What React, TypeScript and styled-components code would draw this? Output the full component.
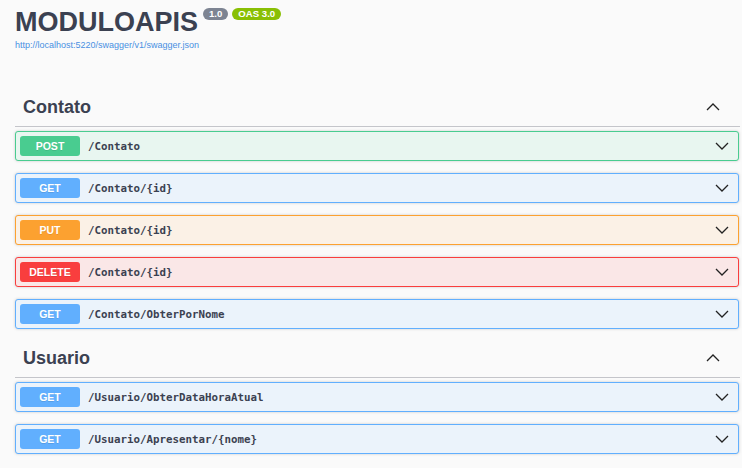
import React from "react";
import styled, { createGlobalStyle } from "styled-components";

const Global = createGlobalStyle`
  html, body { margin: 0; padding: 0; background: #fafafa; }
  body { font-family: "Liberation Sans", Arial, sans-serif; color: #3b4151; }
`;

const Page = styled.div`
  padding: 0 2px 0 15px;
`;

const Info = styled.div`
  padding-top: 6px;
  margin-bottom: 42px;
`;

const TitleRow = styled.div`
  display: flex;
  align-items: flex-start;
`;

const Title = styled.h2`
  margin: 0;
  font-size: 27px;
  line-height: 32px;
  font-weight: 700;
  color: #3b4151;
`;

const Pill = styled.span<{ $bg: string; $gap: number }>`
  display: inline-block;
  margin-top: 2px;
  margin-left: ${(p) => p.$gap}px;
  padding: 0 6px;
  height: 12px;
  line-height: 12px;
  border-radius: 7px;
  background: ${(p) => p.$bg};
  color: #fff;
  font-size: 9.6px;
  font-weight: 700;
`;

const Link = styled.a`
  display: block;
  margin-top: 1px;
  font-size: 9px;
  line-height: 12px;
  color: #4990e2;
  text-decoration: none;
`;

const Section = styled.section`
  margin-bottom: 15px;
`;

const TagHeader = styled.div`
  display: flex;
  align-items: center;
  justify-content: space-between;
  padding: 5px 20px 10px 8px;
  border-bottom: 1px solid #c4c5ca;
  margin-bottom: 4px;
  height: 18px;
`;

const TagName = styled.span`
  font-size: 18px;
  line-height: 18px;
  font-weight: 700;
  color: #3b4151;
`;

const Blocks = styled.div`
  display: flex;
  flex-direction: column;
  gap: 12px;
  padding-right: 1px;
`;

const colors: Record<string, { main: string; bg: string }> = {
  POST: { main: "#49cc90", bg: "#e8f6f0" },
  GET: { main: "#61affe", bg: "#ebf3fb" },
  PUT: { main: "#fca130", bg: "#fbf1e6" },
  DELETE: { main: "#f93e3e", bg: "#fae7e7" },
};

const Block = styled.div<{ $m: string }>`
  display: flex;
  align-items: center;
  height: 20px;
  padding: 4px 9px 4px 4px;
  border: 1px solid ${(p) => colors[p.$m].main};
  background: ${(p) => colors[p.$m].bg};
  border-radius: 3px;
  box-shadow: 0 0 3px rgba(0, 0, 0, 0.19);
`;

const Method = styled.span<{ $m: string }>`
  flex: none;
  width: 60px;
  height: 20px;
  line-height: 20px;
  border-radius: 3px;
  background: ${(p) => colors[p.$m].main};
  color: #fff;
  font-size: 10.5px;
  font-weight: 700;
  text-align: center;
  text-shadow: 0 1px 0 rgba(0, 0, 0, 0.1);
`;

const Path = styled.span`
  flex: 1;
  padding-left: 8px;
  font-family: "DejaVu Sans Mono", "Liberation Mono", monospace;
  font-size: 10.8px;
  font-weight: 700;
  color: #3b4151;
`;

const Chevron = ({ up }: { up?: boolean }) => (
  <svg width="14" height="8" viewBox="0 0 14 8" fill="none">
    <path
      d={up ? "M1 7 L7 1 L13 7" : "M1 1 L7 7 L13 1"}
      stroke="#222"
      strokeWidth="1.3"
    />
  </svg>
);

const ops = {
  Contato: [
    ["POST", "/Contato"],
    ["GET", "/Contato/{id}"],
    ["PUT", "/Contato/{id}"],
    ["DELETE", "/Contato/{id}"],
    ["GET", "/Contato/ObterPorNome"],
  ],
  Usuario: [
    ["GET", "/Usuario/ObterDataHoraAtual"],
    ["GET", "/Usuario/Apresentar/{nome}"],
  ],
};

export default function App() {
  return (
    <>
      <Global />
      <Page>
        <Info>
          <TitleRow>
            <Title>MODULOAPIS</Title>
            <Pill $bg="#7d8492" $gap={5}>1.0</Pill>
            <Pill $bg="#89bf04" $gap={4}>OAS 3.0</Pill>
          </TitleRow>
          <Link href="#">http://localhost:5220/swagger/v1/swagger.json</Link>
        </Info>
        {Object.entries(ops).map(([tag, list]) => (
          <Section key={tag}>
            <TagHeader>
              <TagName>{tag}</TagName>
              <Chevron up />
            </TagHeader>
            <Blocks>
              {list.map(([m, p], i) => (
                <Block key={i} $m={m}>
                  <Method $m={m}>{m}</Method>
                  <Path>{p}</Path>
                  <Chevron />
                </Block>
              ))}
            </Blocks>
          </Section>
        ))}
      </Page>
    </>
  );
}
